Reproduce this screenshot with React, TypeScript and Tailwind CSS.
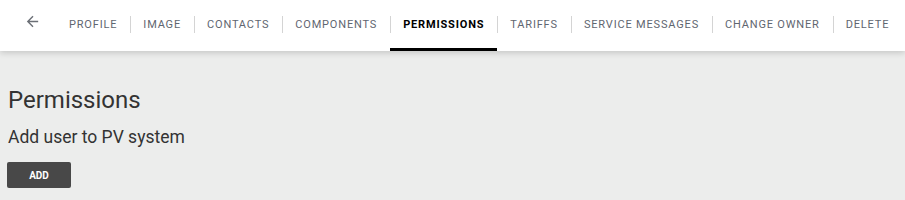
import React from 'react';

const tabs = [
  'Profile',
  'Image',
  'Contacts',
  'Components',
  'Permissions',
  'Tariffs',
  'Service messages',
  'Change owner',
  'Delete',
];

const App = () => {
  const active = 'Permissions';

  return (
    <div className="min-h-[200px] bg-[#ecedec] font-['Roboto',sans-serif]">
      <header className="relative z-10 flex h-[51px] items-stretch bg-white shadow-[0_2px_6px_rgba(0,0,0,0.16)]">
        <button className="flex w-[56px] shrink-0 items-center justify-center pl-[8px] pb-[9px] text-[#6b6f76]">
          <svg width="17" height="17" viewBox="0 0 24 24" fill="currentColor">
            <path d="M20 11H7.83l5.59-5.59L12 4l-8 8 8 8 1.41-1.41L7.83 13H20v-2z" />
          </svg>
        </button>
        <nav className="flex items-stretch">
          {tabs.map((tab, i) => (
            <div key={tab} className="relative flex shrink-0 items-center">
              {i > 0 && <span className="absolute left-0 top-[16px] h-[17px] w-px bg-[#d4d4d4]" />}
              <span
                className={
                  'whitespace-nowrap px-[13px] text-[11px] uppercase tracking-[0.075em] ' +
                  (tab === active ? 'font-bold text-black' : 'text-[#5f6670]')
                }
              >
                {tab}
              </span>
              {tab === active && <span className="absolute bottom-0 left-0 right-0 h-[3px] bg-black" />}
            </div>
          ))}
        </nav>
      </header>

      <main className="px-[8px] pt-[34px]">
        <h1 className="text-[24px] leading-[30px] text-[#333]">Permissions</h1>
        <p className="mt-[10px] text-[17.5px] leading-[24px] text-[#333]">Add user to PV system</p>
        <button className="mt-[13px] -ml-px h-[26px] w-[64px] rounded-[2px] bg-[#484848] text-[10px] font-bold text-white">
          ADD
        </button>
      </main>
    </div>
  );
};

export default App;
